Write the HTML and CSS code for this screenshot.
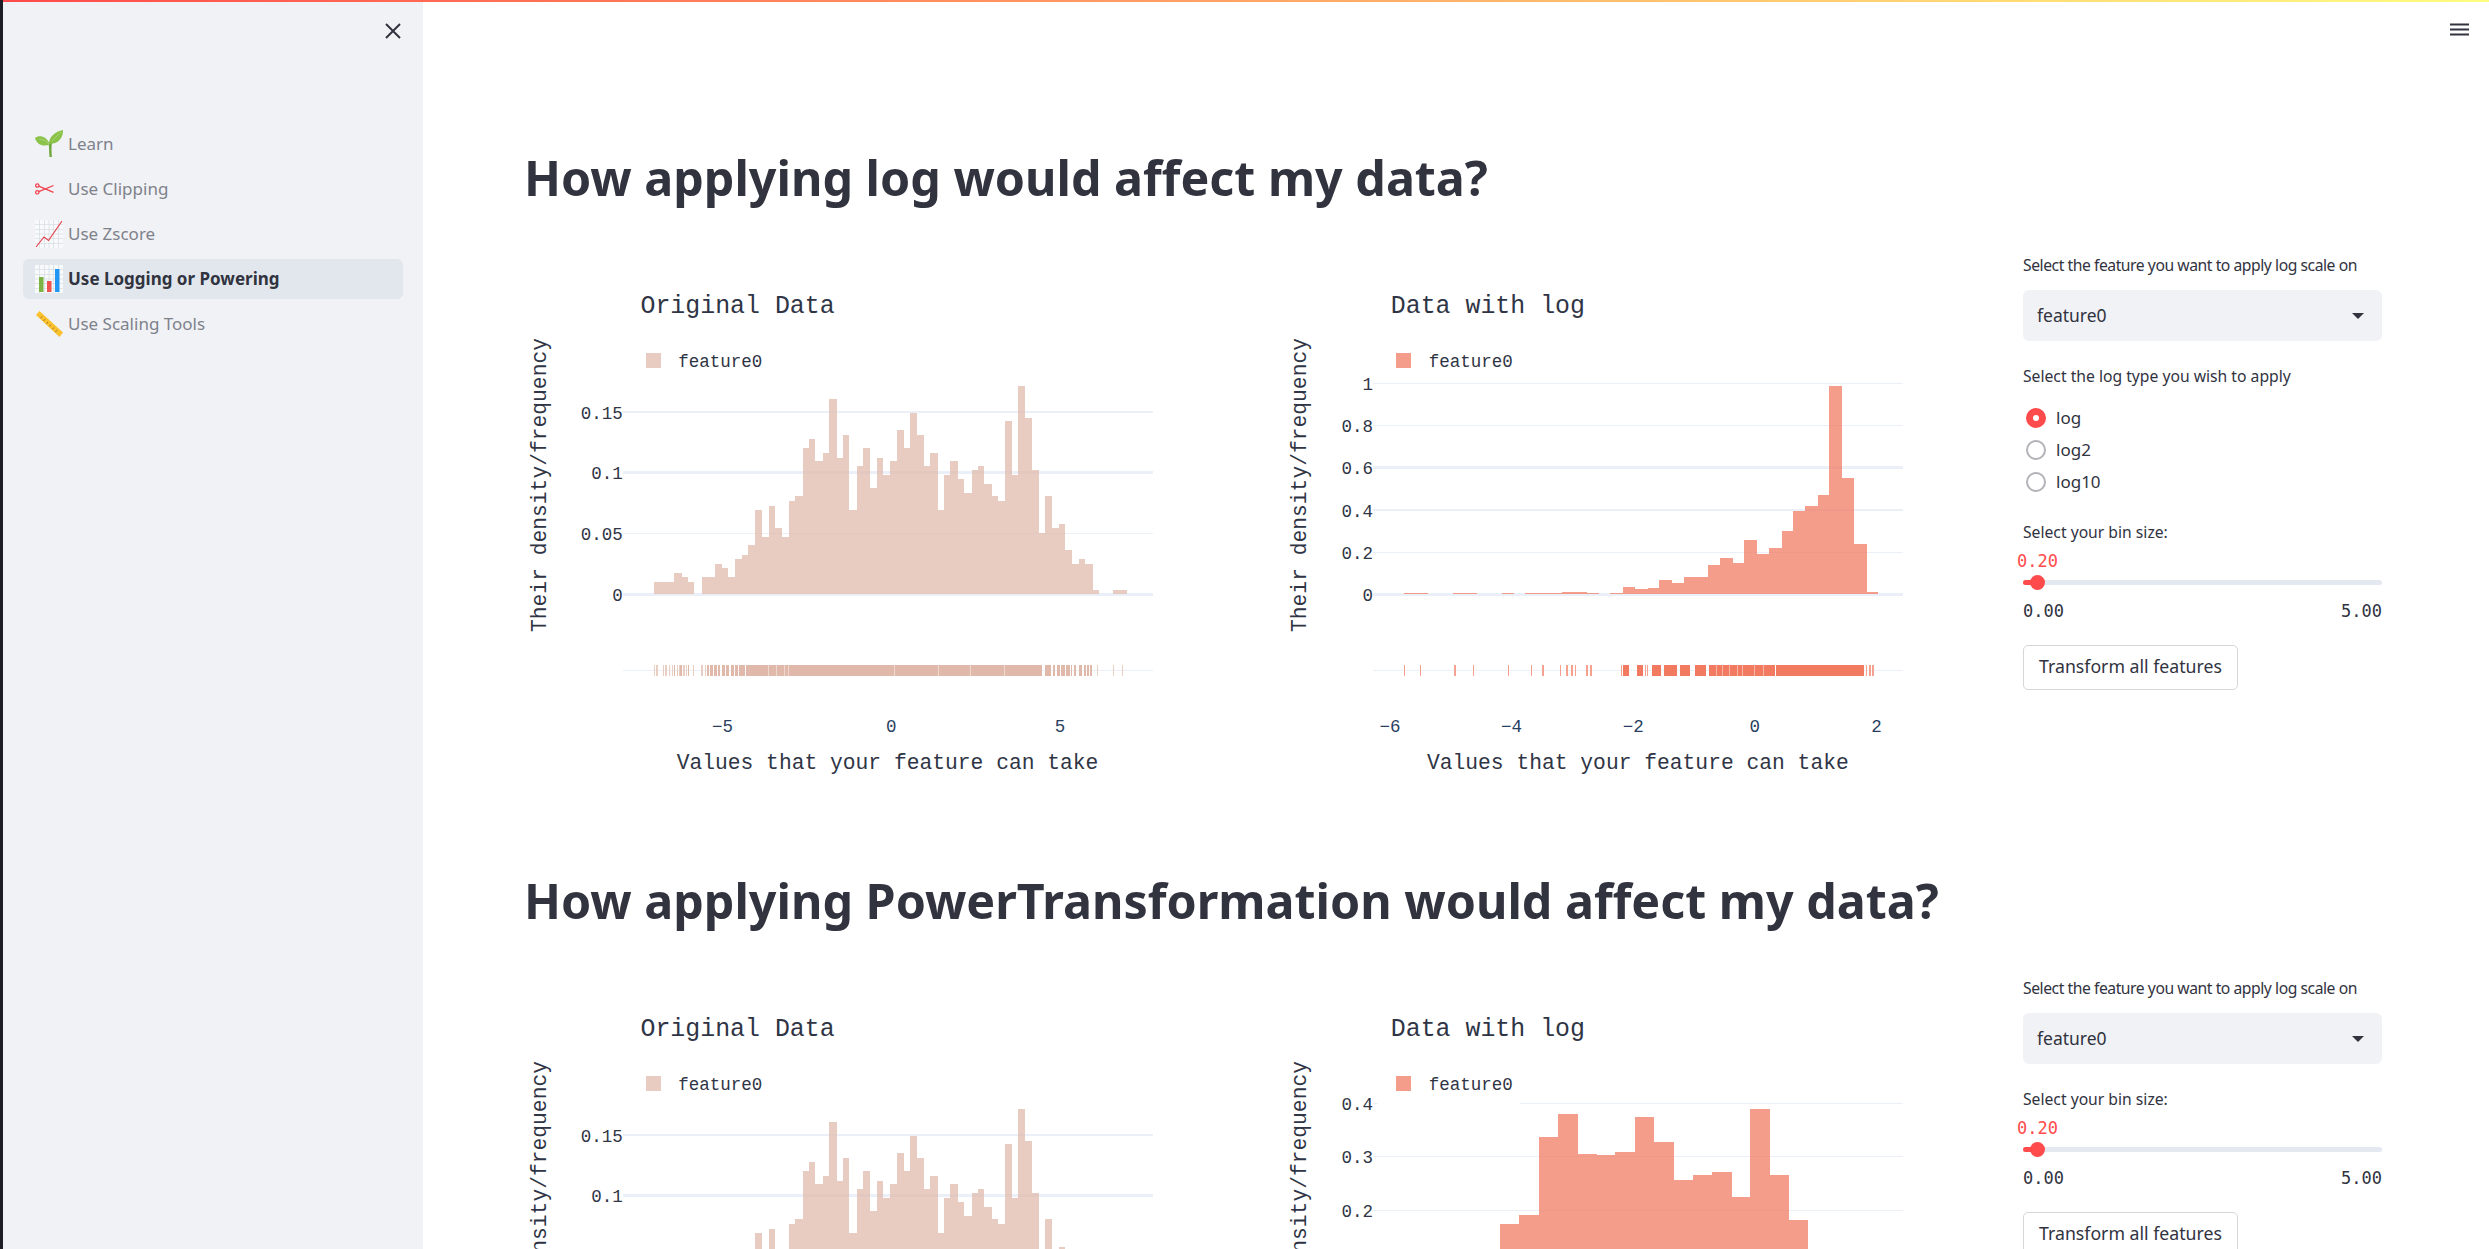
FILE: index.html
```html
<!DOCTYPE html>
<html lang="en">
<head>
  <meta charset="UTF-8" />
  <meta name="viewport" content="width=device-width, initial-scale=1" />
  <title>Use Logging or Powering</title>
  <link rel="stylesheet" href="styles.css">
</head>
<body>
  <div class="edge"></div>
  <div class="deco"></div>
  <button class="menu-btn" aria-label="Menu">
    <svg width="19" height="13" viewBox="0 0 19 13"><path d="M0 1.5h19M0 6.5h19M0 11.5h19" stroke="#31333f" stroke-width="2" fill="none"/></svg>
  </button>

  <aside class="sidebar">
    <button class="close-btn" aria-label="Close">
      <svg width="16" height="16" viewBox="0 0 16 16"><path d="M1 1l14 14M15 1L1 15" stroke="#31333f" stroke-width="2" fill="none"/></svg>
    </button>
    <nav class="nav">
      <a class="nav-item">
        <svg class="nav-icon" viewBox="0 0 28 28">
          <path d="M13.5 13c.8 4 .6 9 1 14h2.4c-.5-5-.6-10 .1-15z" fill="#6fa53b"/>
          <path d="M0 8c4-3 11-2.500 15 6.500C8 17 2 15 0 8z" fill="#8bc34a"/>
          <path d="M14 13.500C14 7 20 1.500 28 0c.500 8-6 15-14 13.500z" fill="#8bc34a"/>
          <path d="M4 9c4 0 7 2 10 5M17 11c3-3 6-6 9-9" stroke="#aed581" stroke-width=".8" fill="none"/>
        </svg>
        <span>Learn</span>
      </a>
      <a class="nav-item">
        <svg class="nav-icon" viewBox="0 0 28 28">
          <circle cx="2.300" cy="10.500" r="1.700" fill="none" stroke="#f0404e" stroke-width="1.200"/>
          <circle cx="2.300" cy="17.300" r="1.700" fill="none" stroke="#f0404e" stroke-width="1.200"/>
          <path d="M3.800 11.200L18.500 17.300M3.800 16.600L18.500 10.500" stroke="#f0404e" stroke-width="1.300" fill="none"/>
        </svg>
        <span>Use Clipping</span>
      </a>
      <a class="nav-item">
        <svg class="nav-icon" viewBox="0 0 28 28">
          <rect width="28" height="28" fill="#f7f9fa"/>
          <path d="M4.500 0v28M9.500 0v28M14 0v28M18.500 0v28M23.500 0v28M0 4.500h28M0 9.500h28M0 14h28M0 18.500h28M0 23.500h28" stroke="#d5dde2" stroke-width=".7" fill="none"/>
          <path d="M1 27l8-10 4.500 3.500L27 1" stroke="#e5404c" stroke-width="1.200" fill="none"/>
        </svg>
        <span>Use Zscore</span>
      </a>
      <a class="nav-item nav-active">
        <svg class="nav-icon" viewBox="0 0 28 28">
          <rect width="28" height="28" fill="#f7f9fa"/>
          <path d="M4.500 0v28M9.500 0v28M14 0v28M18.500 0v28M23.500 0v28M0 4.500h28M0 9.500h28M0 14h28M0 18.500h28M0 23.500h28" stroke="#d5dde2" stroke-width=".7" fill="none"/>
          <rect x="4" y="12" width="4.500" height="15" fill="#7cb342"/>
          <rect x="12" y="16" width="4.500" height="11" fill="#ef5350"/>
          <rect x="20" y="4" width="4.500" height="23" fill="#2196f3"/>
        </svg>
        <span>Use Logging or Powering</span>
      </a>
      <a class="nav-item">
        <svg class="nav-icon" viewBox="0 0 28 28">
          <path d="M4.500 1L28 22.500 24.500 27 1 5z" fill="#fbc02d"/>
          <path d="M7 6.500l-1.500 1.700M10 9.200l-1.500 1.700M13 12l-1.500 1.700M16 14.700l-1.500 1.700M19 17.500l-1.500 1.700M22 20.200l-1.500 1.700" stroke="#8d6e2a" stroke-width=".9" fill="none"/>
        </svg>
        <span>Use Scaling Tools</span>
      </a>
    </nav>
  </aside>

  <main class="main">
    <section class="block">
      <h1>How applying log would affect my data?</h1>
      <div class="row">
        <svg class="chart" data-chart="orig"></svg>
        <svg class="chart" data-chart="log"></svg>
        <div class="controls">
          <label class="lbl lbl-long">Select the feature you want to apply log scale on</label>
          <div class="select"><span>feature0</span><i class="caret"></i></div>
          <label class="lbl lbl-next">Select the log type you wish to apply</label>
          <div class="radios">
            <div class="radio radio-on"><i></i><span>log</span></div>
            <div class="radio"><i></i><span>log2</span></div>
            <div class="radio"><i></i><span>log10</span></div>
          </div>
          <label class="lbl lbl-bin">Select your bin size:</label>
          <div class="slider">
            <div class="slider-val">0.20</div>
            <div class="track"><div class="fill"></div><div class="thumb"></div></div>
            <div class="slider-range"><span>0.00</span><span>5.00</span></div>
          </div>
          <button class="btn">Transform all features</button>
        </div>
      </div>
    </section>

    <section class="block">
      <h1>How applying PowerTransformation would affect my data?</h1>
      <div class="row">
        <svg class="chart" data-chart="orig"></svg>
        <svg class="chart" data-chart="power"></svg>
        <div class="controls">
          <label class="lbl lbl-long">Select the feature you want to apply log scale on</label>
          <div class="select"><span>feature0</span><i class="caret"></i></div>
          <label class="lbl lbl-next">Select your bin size:</label>
          <div class="slider">
            <div class="slider-val">0.20</div>
            <div class="track"><div class="fill"></div><div class="thumb"></div></div>
            <div class="slider-range"><span>0.00</span><span>5.00</span></div>
          </div>
          <button class="btn">Transform all features</button>
        </div>
      </div>
    </section>
  </main>

  <script src="chart.js"></script>
</body>
</html>
```

FILE: styles.css
```css
* {
  box-sizing: border-box;
}
html, body {
  height: 100%;
}
body {
  margin: 0;
  display: flex;
  height: 100vh;
  overflow: hidden;
  background: #fff;
  color: #31333f;
  font-family: "Noto Sans", sans-serif;
  font-size: 16px;
}
.edge {
  width: 3px;
  flex: none;
  background: #1f1e28;
}
.deco {
  position: absolute;
  top: 0;
  left: 3px;
  right: 0;
  height: 2px;
  background: linear-gradient(90deg, #ff4b4b, #fffd80);
  z-index: 5;
}
.menu-btn {
  position: absolute;
  top: 23px;
  left: 2450px;
  padding: 0;
  border: none;
  background: none;
  display: flex;
}

/* sidebar */
.sidebar {
  width: 420px;
  flex: none;
  background: #f0f2f6;
  padding: 23px 20px 0;
}
.close-btn {
  display: flex;
  margin-left: auto;
  margin-right: 2px;
  padding: 0;
  border: none;
  background: none;
}
.nav {
  display: flex;
  flex-direction: column;
  gap: 5px;
  margin-top: 85px;
}
.nav-item {
  display: flex;
  align-items: center;
  gap: 5px;
  height: 40px;
  padding: 0 12px;
  border-radius: 6px;
  color: #7f818b;
  font-size: 17px;
}
.nav-item span {
  margin-top: -2px;
}
.nav-icon {
  width: 28px;
  height: 28px;
  flex: none;
}
.nav-active {
  background: #e2e7ee;
  color: #31333f;
  font-weight: 700;
}

/* main column */
.main {
  flex: 1;
  padding: 142px 0 0 101px;
  min-width: 0;
}
.block {
  height: 723px;
}
h1 {
  margin: 0 0 38px;
  height: 70px;
  line-height: 70px;
  font-size: 48.400px;
  font-weight: 700;
  white-space: nowrap;
}
.row {
  display: grid;
  grid-template-columns: 750px 749px 359px;
}
.chart {
  display: block;
  width: 750px;
  height: 562px;
}
.chart text {
  font-family: "Liberation Mono", monospace;
  fill: #2f3545;
}
.chart .chart-title {
  font-size: 24.900px;
}
.chart .axis-title {
  font-size: 21.300px;
}
.chart .tick, .chart .legend-text {
  font-size: 17.500px;
}
.chart .xtick {
  fill: #2a3f5f;
}
.chart rect {
  shape-rendering: crispEdges;
}

/* controls */
.controls {
  display: flex;
  flex-direction: column;
  align-items: stretch;
}
.lbl {
  height: 30px;
  line-height: 30px;
  font-size: 15.700px;
  white-space: nowrap;
}
.lbl-long {
  letter-spacing: -0.45px;
}
.lbl-next {
  margin-top: 20px;
}
.lbl-bin {
  margin-top: 19px;
}
.select {
  margin-top: 10px;
  height: 51px;
  padding: 0 14px;
  border-radius: 6px;
  background: #f0f2f6;
  display: flex;
  align-items: center;
  justify-content: space-between;
  font-size: 17.500px;
}
.select span {
  margin-top: -2px;
}
.caret {
  width: 0;
  height: 0;
  border-left: 6px solid transparent;
  border-right: 6px solid transparent;
  border-top: 6px solid #31333f;
  margin-right: 4px;
}
.radios {
  margin-top: 11px;
}
.radio {
  height: 32px;
  display: flex;
  align-items: center;
  gap: 10px;
  padding-left: 3px;
  font-size: 17px;
}
.radio span {
  margin-top: -2px;
}
.radio i {
  width: 20px;
  height: 20px;
  border-radius: 50%;
  border: 2px solid #b2b3b8;
  flex: none;
}
.radio-on i {
  border: 7px solid #ff4b4b;
  background: #fff;
}
.slider-val {
  height: 24px;
  line-height: 24px;
  margin: 2px 0 0 -6px;
  color: #ff4b4b;
  font-family: "DejaVu Sans Mono", monospace;
  font-size: 17px;
}
.track {
  position: relative;
  height: 5px;
  margin-top: 7px;
  border-radius: 3px;
  background: #e4e8f0;
}
.fill {
  width: 14px;
  height: 5px;
  border-radius: 3px;
  background: #ff4b4b;
}
.thumb {
  position: absolute;
  left: 7px;
  top: -5px;
  width: 15px;
  height: 15px;
  border-radius: 50%;
  background: #ff4b4b;
}
.slider-range {
  display: flex;
  justify-content: space-between;
  height: 24px;
  line-height: 24px;
  margin-top: 14px;
  font-family: "DejaVu Sans Mono", monospace;
  font-size: 17px;
}
.btn {
  align-self: flex-start;
  width: 215px;
  height: 45px;
  margin-top: 22px;
  padding: 0 0 3px;
  background: #fff;
  border: 1px solid #d5d6d9;
  border-radius: 5px;
  color: #31333f;
  font-family: inherit;
  font-size: 17.700px;
}
```

FILE: chart.js
```js
const NS = 'http://www.w3.org/2000/svg';
const GRID = '#ebf0f8';
const SX = 2.376; // horizontal px per chart unit in the measured values
const SY = 3;

// [bin start, bar top] - null top means empty bin, last entry closes the bars
const origBars = [[342,936],[390,909],[408,921],[423,936],[437,null],[456,921],[487,882],[504,894],[518,921],[535,867],[551,855],[565,825],[582,720],[599,801],[615,708],[630,774],[646,801],[663,693],[677,678],[696,534],[711,507],[725,573],[744,549],[758,387],[777,564],[791,495],[805,720],[824,588],[839,534],[855,654],[872,564],[886,615],[903,573],[919,480],[936,534],[950,429],[967,495],[984,588],[998,549],[1017,720],[1031,615],[1045,573],[1064,627],[1079,669],[1098,600],[1112,588],[1126,642],[1145,678],[1159,693],[1176,453],[1193,615],[1207,348],[1224,444],[1240,600],[1257,789],[1271,678],[1288,774],[1304,762],[1319,840],[1335,882],[1352,867],[1366,882],[1385,960],[1399,null],[1433,960],[1466,null]];
const logBars = [[318,969],[375,null],[435,969],[492,null],[551,969],[580,null],[606,969],[694,966],[753,969],[782,null],[808,969],[839,951],[867,957],[898,954],[924,930],[955,939],[984,921],[1041,885],[1069,864],[1100,879],[1126,810],[1157,852],[1186,834],[1216,783],[1243,723],[1271,708],[1302,675],[1328,348],[1359,624],[1387,822],[1418,966],[1444,null]];
const powerBars = [[546,693],[592,666],[639,432],[684,363],[732,483],[777,486],[820,477],[867,372],[912,447],[960,561],[1005,546],[1050,537],[1098,612],[1140,348],[1188,546],[1233,681],[1278,null]];

// rug ticks: single numbers are thin ticks, pairs are solid runs
const origRug = [342,348,364,369,378,385,[390,393],397,401,[405,408],412,417,[424,426],435,455,463,[467,473],[476,482],[485,492],[495,500],[503,510],[513,520],[524,532],[535,542],[545,558],[560,1265],[1270,1286],[1289,1296],[1299,1306],[1309,1318],[1321,1330],[1333,1336],[1339,1346],[1353,1360],[1363,1368],[1372,1376],[1379,1384],1394,1432,1453];
const logRug = [318,356,438,482,566,619,647,688,704,716,724,752,761,833,[839,852],[871,886],890,896,[908,930],[935,968],[975,998],[1010,1035],[1043,1200],[1203,1412],1416,1424,1431];
// faint seams inside the solid runs
const origSeams = [613,631,651,661,913,1017,1093,1173];
const logSeams = [1060,1075,1090,1110,1122,1150,1172];

const charts = {
  orig: {
    dx: -14, title: 'Original Data', titleX: 310, legendX: 322, legendTextX: 400, tickEnd: 268, plotL: 268, plotR: 1528,
    fill: '#deb7a7', rugFill: '#e0b9aa', bars: origBars, rug: origRug, seams: origSeams,
    grid: [[973,'0',2.500],[790,'0.05',1.250],[608,'0.1',2.500],[426,'0.15',2.500]],
    xticks: [[505,'\u22125'],[906,'0'],[1307,'5']], xtitleX: 897
  },
  log: {
    dx: -4, title: 'Data with log', titleX: 287, legendX: 299, legendTextX: 377, tickEnd: 245, plotL: 245, plotR: 1504,
    fill: '#f0745a', rugFill: '#f27a60', bars: logBars, rug: logRug, seams: logSeams,
    grid: [[973,'0',2.500],[847,'0.2',1.250],[720,'0.4',1.250],[593,'0.6',2.500],[466,'0.8',1.250],[340,'1',1.250]],
    xticks: [[285,'\u22126'],[574,'\u22124'],[863,'\u22122'],[1152,'0'],[1441,'2']], xtitleX: 874
  },
  power: {
    dx: -4, title: 'Data with log', titleX: 287, legendX: 299, legendTextX: 377, tickEnd: 245, plotL: 245, plotR: 1504,
    fill: '#f0745a', rugFill: '#f27a60', bars: powerBars, rug: [], seams: [], barBase: 1400,
    grid: [[652,'0.2',1.250],[490,'0.3',1.250],[331,'0.4',1.250,594]],
    xticks: [], xtitleX: 874
  }
};

function el(svg, name, attrs, text) {
  const node = document.createElementNS(NS, name);
  for (const k in attrs) node.setAttribute(k, attrs[k]);
  if (text) node.textContent = text;
  svg.appendChild(node);
  return node;
}

function drawChart(svg, c) {
  const x = px => px / SX + c.dx;
  const y = px => 20 + px / SY;
  svg.setAttribute('viewBox', '0 0 750 562');

  // grid first, the bars are translucent and sit on top of it
  c.grid.forEach(g => {
    const from = g[3] || c.plotL;
    el(svg, 'rect', { x: x(from), y: y(g[0]) - g[2] / 2, width: x(c.plotR) - x(from), height: g[2], fill: GRID });
    if (g[3]) el(svg, 'rect', { x: x(c.plotL), y: y(g[0]) - g[2] / 2, width: 5, height: g[2], fill: GRID });
    el(svg, 'text', { class: 'tick', x: x(c.tickEnd), y: y(g[0]) + 6.500, 'text-anchor': 'end' }, g[1]);
  });

  for (let i = 0; i < c.bars.length - 1; i++) {
    const top = c.bars[i][1];
    if (top === null) continue;
    el(svg, 'rect', {
      x: x(c.bars[i][0]), y: y(top), width: x(c.bars[i + 1][0]) - x(c.bars[i][0]),
      height: y(c.barBase || 973) - y(top), fill: c.fill, 'fill-opacity': 0.7
    });
  }

  // rug
  if (c.rug.length) {
    el(svg, 'rect', { x: x(c.plotL), y: y(1200), width: x(c.plotR) - x(c.plotL), height: 1.250, fill: GRID });
    c.rug.forEach(r => {
      const run = Array.isArray(r);
      el(svg, 'rect', {
        x: x(run ? r[0] : r), y: y(1185), width: run ? x(r[1]) - x(r[0]) : 1.250, height: 11,
        fill: c.rugFill, 'fill-opacity': run ? 1 : 0.7
      });
    });
    c.seams.forEach(s => {
      el(svg, 'rect', { x: x(s), y: y(1185), width: 1, height: 11, fill: '#fff', 'fill-opacity': 0.45 });
    });
  }

  el(svg, 'text', { class: 'chart-title', x: x(c.titleX), y: y(105) + 8 }, c.title);
  el(svg, 'rect', { x: x(c.legendX), y: y(250), width: 15, height: 15, fill: c.fill, 'fill-opacity': 0.7 });
  el(svg, 'text', { class: 'legend-text', x: x(c.legendTextX), y: y(276) + 5 }, 'feature0');

  c.xticks.forEach(t => {
    el(svg, 'text', { class: 'tick xtick', x: x(t[0]), y: y(1369) + 6, 'text-anchor': 'middle' }, t[1]);
  });
  el(svg, 'text', { class: 'axis-title', x: x(c.xtitleX), y: y(1478) + 6, 'text-anchor': 'middle' }, 'Values that your feature can take');

  const yx = x(72) + 6;
  el(svg, 'text', { class: 'axis-title', x: yx, y: 235, 'text-anchor': 'middle', transform: `rotate(-90 ${yx} 235)` }, 'Their density/frequency');
}

document.querySelectorAll('.chart').forEach(svg => drawChart(svg, charts[svg.dataset.chart]));
```
